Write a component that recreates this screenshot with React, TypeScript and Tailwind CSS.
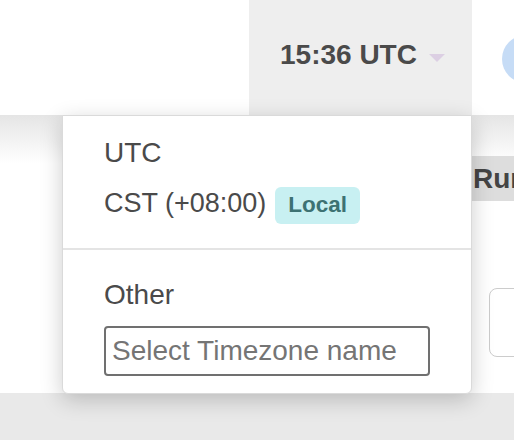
import React from "react";

export default function App() {
  return (
    <div className="relative w-[514px] h-[440px] overflow-hidden bg-white font-['Liberation_Sans',Arial,sans-serif]">
      {/* Header */}
      <div className="flex h-[115px] w-[514px] items-stretch bg-white">
        <div className="w-[249px] shrink-0" />
        <div className="flex w-[223px] shrink-0 items-center bg-[#eeeeee] pb-[6px] pl-[31px]">
          <span className="text-[28px] font-bold leading-[32px] text-[#4a4a4a]">15:36 UTC</span>
          <span className="ml-[12px] mt-[6px] h-0 w-0 border-x-[8px] border-t-[8px] border-x-transparent border-t-[#dccfe3]" />
        </div>
        <div className="w-[30px] shrink-0" />
        <div className="h-[48px] w-[48px] shrink-0 self-center rounded-full bg-[#c6dcf6] -mt-[6px] translate-y-[4px]" />
      </div>

      {/* Content */}
      <div className="flex h-[278px] flex-col bg-[linear-gradient(to_bottom,#e5e5e5,#ffffff_48px)] pl-[459px]">
        <div className="mt-[41px] flex h-[45px] w-[120px] shrink-0 items-start bg-[#dddddd] pl-[14px] pt-[7px]">
          <span className="text-[28px] font-bold leading-[32px] text-[#444444]">Run</span>
        </div>
        <div className="ml-[30px] mt-[87px] h-[69px] w-[120px] shrink-0 rounded-[8px] border-[1.5px] border-[#cccccc] bg-white" />
      </div>

      {/* Bottom band */}
      <div className="h-[47px] bg-[#e9e9e9]" />

      {/* Dropdown overlay */}
      <div className="absolute left-[62px] top-[115px] flex h-[279px] w-[410px] flex-col rounded-b-[6px] border border-[#dadada] bg-white shadow-[0_6px_22px_rgba(0,0,0,0.2)]">
        <div className="flex flex-col pl-[41px] pt-[21px]">
          <div className="text-[28px] leading-[32px] text-[#4a4a4a]">UTC</div>
          <div className="mt-[18px] flex items-start">
            <span className="text-[27px] leading-[32px] text-[#4a4a4a]">CST (+08:00)</span>
            <span className="ml-[9px] flex h-[37px] items-center rounded-[6px] bg-[#c8f0f2] px-[13px] text-[22.5px] font-bold leading-none text-[#3d7273]">
              Local
            </span>
          </div>
        </div>
        <div className="mt-[24px] border-t-2 border-[#e4e4e4]" />
        <div className="flex flex-col pl-[41px] pt-[29px]">
          <div className="text-[28px] leading-[32px] text-[#4a4a4a]">Other</div>
          <input
            className="mt-[15px] h-[50px] w-[326px] rounded-[4px] border-2 border-[#707070] bg-white px-[6px] text-[28px] text-[#4a4a4a] outline-none placeholder:text-[#757575]"
            placeholder="Select Timezone name"
          />
        </div>
      </div>
    </div>
  );
}
